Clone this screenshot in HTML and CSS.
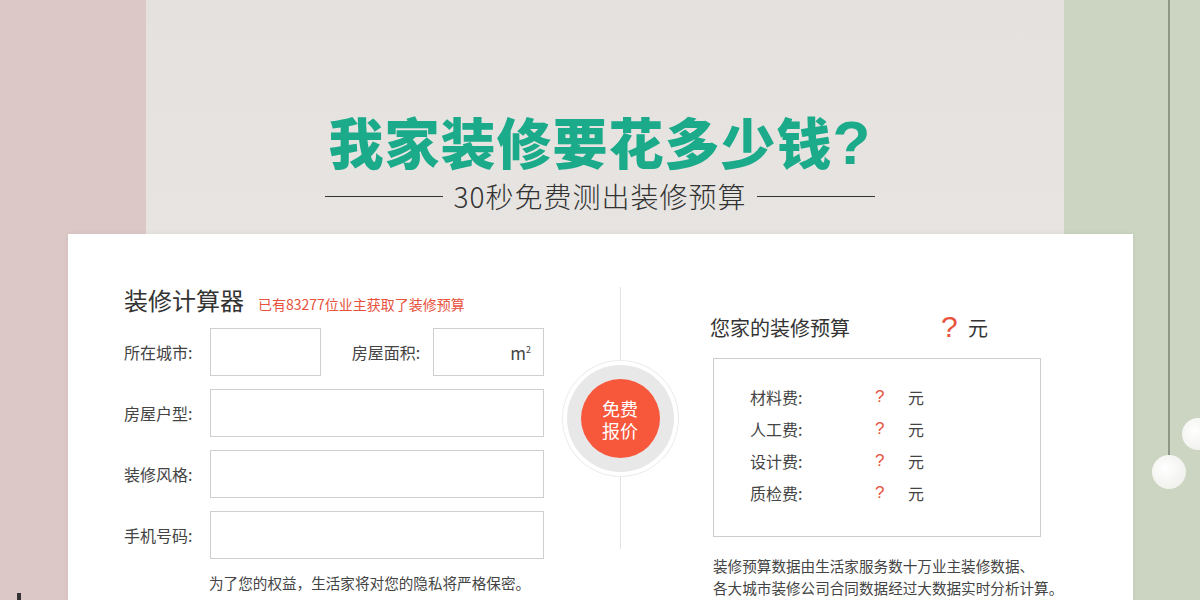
FILE: index.html
```html
<!DOCTYPE html>
<html lang="zh-CN">
<head>
    <meta charset="UTF-8">
    <meta name="viewport" content="width=device-width, initial-scale=1.0">
    <title>装修计算器</title>
    <link rel="stylesheet" href="styles.css">
</head>
<body>
    <div class="page">
        <!-- 背景装饰 -->
        <div class="deco">
            <span class="cord"></span>
            <span class="globe globe-a"></span>
            <span class="globe globe-b"></span>
            <span class="foot"></span>
        </div>

        <div class="hero">
            <h1>我家装修要花多少钱<span class="qmark">?</span></h1>
            <div class="sub">
                <span class="sub-line"></span>
                <span class="sub-text">30秒免费测出装修预算</span>
                <span class="sub-line"></span>
            </div>
        </div>

        <div class="card">
            <!-- 计算器表单 -->
            <form class="calc">
                <div class="calc-head">
                    <h2>装修计算器</h2>
                    <span class="count">已有83277位业主获取了装修预算</span>
                </div>
                <div class="row">
                    <label class="label">所在城市:</label>
                    <input type="text" class="input short">
                    <label class="label label-area">房屋面积:</label>
                    <div class="input short area"><span class="unit">m<sup>2</sup></span></div>
                </div>
                <div class="row">
                    <label class="label">房屋户型:</label>
                    <input type="text" class="input wide">
                </div>
                <div class="row">
                    <label class="label">装修风格:</label>
                    <input type="text" class="input wide">
                </div>
                <div class="row">
                    <label class="label">手机号码:</label>
                    <input type="text" class="input wide">
                </div>
                <p class="privacy">为了您的权益，生活家将对您的隐私将严格保密。</p>
            </form>

            <div class="middle">
                <span class="vline top"></span>
                <button type="button" class="quote"><span>免费</span><span>报价</span></button>
                <span class="vline bottom"></span>
            </div>

            <!-- 预算结果 -->
            <div class="result">
                <div class="result-head">
                    <span class="result-title">您家的装修预算</span>
                    <span class="q big">?</span>
                    <span class="yuan big-yuan">元</span>
                </div>
                <div class="result-box">
                    <div class="fee"><span class="fee-name">材料费:</span><span class="q">?</span><span class="yuan">元</span></div>
                    <div class="fee"><span class="fee-name">人工费:</span><span class="q">?</span><span class="yuan">元</span></div>
                    <div class="fee"><span class="fee-name">设计费:</span><span class="q">?</span><span class="yuan">元</span></div>
                    <div class="fee"><span class="fee-name">质检费:</span><span class="q">?</span><span class="yuan">元</span></div>
                </div>
                <p class="note">装修预算数据由生活家服务数十万业主装修数据、<br>各大城市装修公司合同数据经过大数据实时分析计算。</p>
            </div>
        </div>
    </div>
</body>
</html>
```

FILE: styles.css
```css
body {
    margin: 0;
    font-family: "Noto Sans CJK SC", "Liberation Sans", sans-serif;
    color: #333;
}
.page {
    position: relative;
    height: 600px;
    overflow: hidden;
    background:
        linear-gradient(to right, #dcc9c7 0, #dcc9c7 146px, transparent 146px, transparent 1064px, #ccd4c2 1064px),
        linear-gradient(to bottom, #e4e1de, #ebe9e7);
}
.deco .cord {
    position: absolute;
    left: 1168px;
    top: 0;
    width: 2px;
    height: 458px;
    background: #8f9887;
}
.deco .globe {
    position: absolute;
    border-radius: 50%;
    background: radial-gradient(circle at 40% 40%, #ffffff, #f1f2ee 70%, #e3e6df);
}
.globe-a {
    left: 1152px;
    top: 455px;
    width: 34px;
    height: 34px;
}
.globe-b {
    left: 1182px;
    top: 418px;
    width: 32px;
    height: 32px;
}
.deco .foot {
    position: absolute;
    left: 17px;
    top: 593px;
    width: 4px;
    height: 10px;
    background: #333;
}

/* 标题 */
.hero {
    padding-top: 110px;
    text-align: center;
}
h1 {
    margin: 0;
    height: 60px;
    font-size: 55px;
    line-height: 60px;
    font-weight: 900;
    letter-spacing: 1px;
    color: #1bab8b;
}
.qmark {
    font-family: "Liberation Sans", sans-serif;
    font-weight: bold;
    font-size: 62px;
    line-height: 50px;
}
.sub {
    display: flex;
    justify-content: center;
    align-items: center;
    gap: 11px;
    height: 36px;
    margin-top: 8px;
}
.sub-line {
    width: 118px;
    height: 1px;
    background: #333;
}
.sub-text {
    font-size: 28px;
    line-height: 34px;
    font-weight: 300;
    letter-spacing: 1px;
    color: #333;
}

/* 卡片 */
.card {
    position: relative;
    display: flex;
    align-items: flex-start;
    margin: 20px 67px 0 68px;
    height: 420px;
    background: #fff;
    box-shadow: 0 0 6px rgba(0, 0, 0, 0.06);
}
.calc {
    width: 420px;
    padding: 50px 0 0 56px;
}
.calc-head {
    display: flex;
    align-items: baseline;
    height: 32px;
    margin-bottom: 12px;
}
h2 {
    margin: 0;
    font-size: 24px;
    line-height: 32px;
    font-weight: normal;
    color: #333;
}
.count {
    margin-left: 14px;
    font-size: 14px;
    color: #e8523d;
}
.row {
    display: flex;
    align-items: center;
    height: 48px;
    margin-bottom: 13px;
}
.label {
    width: 86px;
    font-size: 16px;
    color: #444;
}
.label-area {
    width: 82px;
    margin-left: 31px;
}
.input {
    box-sizing: border-box;
    height: 48px;
    border: 1px solid #cfcfcf;
    background: #fff;
    padding: 0 10px;
    font-size: 15px;
}
.short {
    width: 111px;
}
.wide {
    width: 334px;
}
.area {
    display: flex;
    justify-content: flex-end;
    align-items: center;
    padding-right: 12px;
}
.unit {
    font-size: 17px;
    color: #444;
}
.unit sup {
    font-size: 9px;
}
.privacy {
    margin: 6px 0 0 85px;
    font-size: 14.6px;
    line-height: 22px;
    color: #444;
}

/* 中间按钮 */
.middle {
    width: 152px;
    padding-top: 53px;
    display: flex;
    flex-direction: column;
    align-items: center;
}
.vline {
    width: 1px;
    background: #e3e3e3;
}
.vline.top {
    height: 111px;
}
.vline.bottom {
    height: 110px;
}
.quote {
    position: relative;
    display: flex;
    flex-direction: column;
    justify-content: center;
    align-items: center;
    width: 79px;
    height: 79px;
    margin: -19px 0;
    padding: 0;
    border: none;
    border-radius: 50%;
    background: #f7583c;
    box-shadow: 0 0 0 14px #e8e8e8, 0 0 0 18px #fff, 0 0 0 19px #ececec;
    color: #fff;
    font-family: inherit;
    font-size: 18px;
    line-height: 22px;
    cursor: pointer;
}
.quote span {
    height: 22px;
}

/* 结果 */
.result {
    padding: 79px 0 0 14px;
}
.result-head {
    display: flex;
    align-items: center;
    height: 28px;
}
.result-title {
    width: 231px;
    font-size: 20px;
    color: #333;
}
.q {
    font-family: "Liberation Sans", sans-serif;
    color: #e8523d;
}
.q.big {
    font-size: 30px;
    width: 27px;
}
.big-yuan {
    font-size: 20px;
}
.result-box {
    box-sizing: border-box;
    width: 328px;
    height: 179px;
    margin: 17px 0 0 3px;
    padding: 22px 0 0 36px;
    border: 1px solid #cdcdcd;
}
.fee {
    display: flex;
    align-items: center;
    height: 32px;
    font-size: 16px;
    color: #444;
}
.fee-name {
    width: 125px;
}
.fee .q {
    width: 33px;
    font-size: 17px;
}
.note {
    margin: 18px 0 0 3px;
    font-size: 14.6px;
    line-height: 22px;
    color: #444;
}
```
